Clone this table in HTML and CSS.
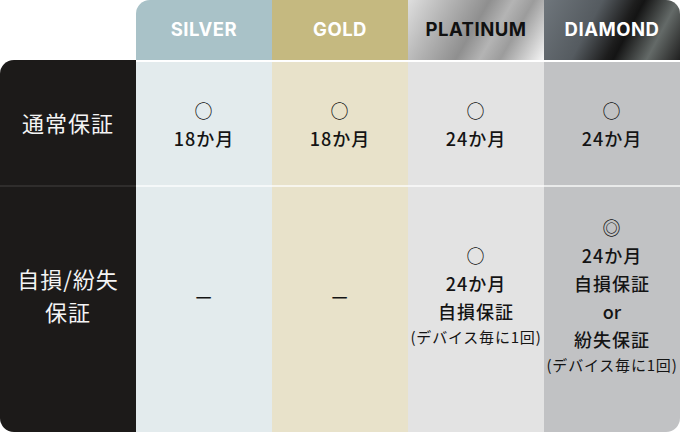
FILE: index.html
```html
<!DOCTYPE html>
<html lang="ja">
<head>
<meta charset="utf-8">
<title>保証比較</title>
<link rel="stylesheet" href="styles.css">
</head>
<body>
<div class="table">
  <div class="corner"></div>
  <div class="head head-silver">SILVER</div>
  <div class="head head-gold">GOLD</div>
  <div class="head head-platinum">PLATINUM</div>
  <div class="head head-diamond">DIAMOND</div>

  <div class="label label-top">通常保証</div>
  <div class="cell row1 silver"><span>○</span><span>18か月</span></div>
  <div class="cell row1 gold"><span>○</span><span>18か月</span></div>
  <div class="cell row1 platinum"><span>○</span><span>24か月</span></div>
  <div class="cell row1 diamond"><span>○</span><span>24か月</span></div>

  <div class="label label-bottom"><span>自損/紛失</span><span>保証</span></div>
  <div class="cell row2 silver"><span>—</span></div>
  <div class="cell row2 gold"><span>—</span></div>
  <div class="cell row2 platinum"><span>○</span><span>24か月</span><span>自損保証</span><span class="note">(デバイス毎に1回)</span></div>
  <div class="cell row2 diamond diamond-last"><span>◎</span><span>24か月</span><span>自損保証</span><span class="latin">or</span><span>紛失保証</span><span class="note">(デバイス毎に1回)</span></div>
</div>
</body>
</html>
```
FILE: styles.css
```css
html, body {
  margin: 0;
  padding: 0;
  background: #ffffff;
}

.table {
  width: 680px;
  height: 432px;
  display: grid;
  grid-template-columns: repeat(5, 136px);
  grid-template-rows: 60px 125px 247px;
  font-family: "Noto Sans CJK JP", "Noto Sans", sans-serif;
  color: #141414;
}

.head {
  display: flex;
  align-items: center;
  justify-content: center;
  font-family: "Inter", "Noto Sans", sans-serif;
  font-weight: 700;
  font-size: 18.5px;
  letter-spacing: 0.5px;
  color: #ffffff;
  padding-bottom: 2px;
  box-sizing: border-box;
}

.head-silver {
  background: #a9c2c8;
  border-top-left-radius: 14px;
}

.head-gold {
  background: #c5b980;
}

.head-platinum {
  color: #111111;
  background: linear-gradient(120deg, #dedede 0%, #b9b9b9 22%, #8f8f8f 48%, #b4b4b4 62%, #9c9c9c 74%, #f6f6f6 100%);
}

.head-diamond {
  border-top-right-radius: 14px;
  background: linear-gradient(118deg, #6f767c 0%, #555b60 35%, #1d1d1d 55%, #141414 60%, #646a68 80%, #3b3d3c 92%, #202020 100%);
}

.label {
  background: #1c1a19;
  color: #f4f4f4;
  font-size: 22px;
  letter-spacing: 1px;
  line-height: 33px;
  display: flex;
  flex-direction: column;
  align-items: center;
  justify-content: center;
  box-sizing: border-box;
}

.label-top {
  border-top-left-radius: 14px;
}

.label-bottom {
  border-top: 2px solid #2f2d2c;
  border-bottom-left-radius: 14px;
  padding-bottom: 30px;
}

.cell {
  display: flex;
  flex-direction: column;
  align-items: center;
  justify-content: center;
  font-size: 18px;
  font-weight: 500;
  line-height: 28px;
  letter-spacing: 1px;
  box-sizing: border-box;
}

.latin {
  letter-spacing: 0;
}

.row1 {
  border-top: 2px solid #ffffff;
}

.row2 {
  border-top: 2px solid rgba(255, 255, 255, 0.65);
  padding-bottom: 30px;
}

.note {
  font-size: 15px;
  font-weight: 400;
  line-height: 24px;
  letter-spacing: 0.8px;
  white-space: nowrap;
}

.silver { background: #e3ebed; }
.gold { background: #e8e2ca; }
.platinum { background: #e3e3e3; }
.diamond { background: #c1c2c4; }

.diamond-last {
  border-bottom-right-radius: 14px;
}
```
